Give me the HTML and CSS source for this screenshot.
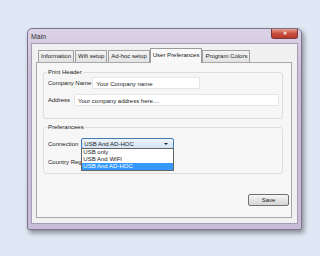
FILE: index.html
```html
<!DOCTYPE html>
<html lang="en">
<head>
  <meta charset="UTF-8" />
  <title>Main</title>
  <link rel="stylesheet" href="styles.css">
</head>
<body>
  <div class="screen">
    <div class="window">
      <div class="titlebar">
        <span class="title">Main</span>
        <div class="close">&#x2715;</div>
      </div>
      <div class="client">
        <div class="tabs">
          <div class="tab">Information</div>
          <div class="tab">Wifi setup</div>
          <div class="tab">Ad-hoc setup</div>
          <div class="tab active">User Preferances</div>
          <div class="tab">Program Colors</div>
        </div>
        <div class="panel">
          <div class="group print-header">
            <div class="group-title">Print Header</div>
            <div class="row">
              <span class="label">Company Name</span>
              <div class="input company">Your Company name</div>
            </div>
            <div class="row second">
              <span class="label">Address</span>
              <div class="input address">Your company address here....</div>
            </div>
          </div>

          <div class="group prefs">
            <div class="group-title">Preferancees</div>
            <div class="row">
              <span class="label">Connection</span>
              <div class="combo-wrap">
                <div class="combo">
                  <span>USB And AD-HOC</span>
                  <span class="arrow"></span>
                </div>
                <ul class="dropdown">
                  <li>USB only</li>
                  <li>USB And WIFI</li>
                  <li class="selected">USB And AD-HOC</li>
                </ul>
              </div>
            </div>
            <div class="row second">
              <span class="label">Country Region</span>
            </div>
          </div>

          <div class="actions">
            <button class="btn">Save</button>
          </div>
        </div>
      </div>
    </div>
  </div>
</body>
</html>
```

FILE: styles.css
```css
body {
  margin: 0;
  background: #dfe8f4;
  font-family: "Liberation Sans", Arial, sans-serif;
  font-size: 6px;
  color: #1a1a1a;
}
.screen {
  padding: 28px 0 0 27px;
  height: 228px;
}
.window {
  width: 273px;
  height: 200px;
  border: 1px solid #7d7290;
  border-radius: 5px 5px 2px 2px;
  background: linear-gradient(#dcd3e6, #cbc0d9 20%, #c8bdd6);
  box-shadow: 2px 3px 5px rgba(0, 0, 0, 0.4);
  display: flex;
  flex-direction: column;
}
.titlebar {
  height: 14px;
  display: flex;
  align-items: center;
  padding-left: 3px;
}
.title {
  font-size: 7px;
  color: #333;
}
.close {
  margin-left: auto;
  margin-right: 3px;
  align-self: flex-start;
  width: 25px;
  height: 9px;
  border: 1px solid #7a3a3a;
  border-top: none;
  border-radius: 0 0 3px 3px;
  background: linear-gradient(#e8a090, #c9503f 50%, #b8382a);
  color: #fff;
  font-size: 5px;
  font-weight: bold;
  line-height: 9px;
  text-align: center;
}
.client {
  flex: 1;
  margin: 0 3px 5px 3px;
  background: #f0f0f0;
  border: 1px solid #a69db2;
  padding: 5px 5px 5px 4px;
  display: flex;
  flex-direction: column;
}
.tabs {
  display: flex;
  align-items: flex-end;
  height: 13px;
  padding-left: 2px;
  gap: 1px;
  position: relative;
  z-index: 1;
}
.tab {
  height: 11px;
  line-height: 11px;
  padding: 0 2px;
  border: 1px solid #a0a0a0;
  border-bottom: none;
  background: linear-gradient(#f4f4f4, #e2e2e2);
  white-space: nowrap;
}
.tab.active {
  height: 14px;
  line-height: 13px;
  margin: 0 -1px -1px -1px;
  background: #f8f8f8;
  border-color: #9a9a9a;
}
.panel {
  flex: 1;
  border: 1px solid #a9a9a9;
  background: #f6f6f6;
  padding: 9px 2px 0 6px;
}
.group {
  border: 1px solid #dddddd;
  border-radius: 3px;
  margin-right: 6px;
  padding: 0 3px 0 4px;
}
.group-title {
  margin: -4px 0 0 -1px;
  line-height: 7px;
  padding: 0 1px;
  width: fit-content;
  background: #f6f6f6;
}
.print-header {
  padding-bottom: 12px;
}
.prefs {
  margin-top: 8px;
  padding-bottom: 6px;
}
.row {
  display: flex;
  align-items: center;
  gap: 1px;
  margin-top: 1px;
}
.row.second {
  margin-top: 5px;
}
.prefs .row {
  margin-top: 7px;
  height: 11px;
}
.label {
  white-space: nowrap;
}
.input {
  height: 12px;
  line-height: 12px;
  background: #fff;
  border: 1px solid #e6e6e6;
  box-sizing: border-box;
  padding: 0 3px;
  white-space: nowrap;
}
.company {
  width: 108px;
}
.address {
  flex: 1;
  margin-left: 3px;
}
.combo-wrap {
  position: relative;
  margin-left: 2px;
}
.combo {
  width: 93px;
  height: 11px;
  box-sizing: border-box;
  border: 1px solid #3f7ab0;
  border-radius: 2px;
  background: linear-gradient(#eef5fc, #d2e3f4);
  display: flex;
  align-items: center;
  justify-content: space-between;
  padding: 0 5px 0 2px;
}
.arrow {
  width: 0;
  height: 0;
  border-left: 2px solid transparent;
  border-right: 2px solid transparent;
  border-top: 2px solid #222;
}
.dropdown {
  position: absolute;
  top: 10px;
  left: 0;
  width: 93px;
  box-sizing: border-box;
  margin: 0;
  padding: 0;
  list-style: none;
  background: #fff;
  border: 1px solid #646464;
  z-index: 2;
}
.dropdown li {
  height: 7px;
  line-height: 7px;
  padding-left: 1px;
}
.dropdown li.selected {
  background: #3399ff;
  color: #fff;
}
.actions {
  display: flex;
  justify-content: flex-end;
  margin-top: 20px;
}
.btn {
  width: 41px;
  height: 12px;
  padding: 0;
  font: inherit;
  color: #222;
  border: 1px solid #707070;
  border-radius: 2px;
  background: linear-gradient(#f6f6f6, #e4e4e4 50%, #d6d6d6);
}
```
